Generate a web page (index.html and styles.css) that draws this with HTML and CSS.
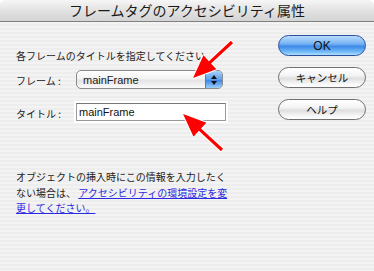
FILE: index.html
```html
<!DOCTYPE html>
<html>
<head>
  <title>フレームタグのアクセシビリティ属性</title>
  <meta charset="UTF-8">
  <link rel="stylesheet" href="styles.css">
</head>
<body>
  <div class="dialog">
    <div class="title-bar">フレームタグのアクセシビリティ属性</div>

    <div class="content">
      <div class="left-column">
        <p class="intro">各フレームのタイトルを指定してください</p>

        <div class="form-row">
          <label class="field-label" for="frame-select">フレーム :</label>
          <div class="popup" id="frame-select">
            <span class="popup-text">mainFrame</span>
            <span class="stepper">
              <svg width="8" height="12" viewBox="0 0 8 12">
                <path d="M4 1 L7 5 L1 5 Z" fill="#111"/>
                <path d="M4 11 L7 7 L1 7 Z" fill="#111"/>
              </svg>
            </span>
          </div>
        </div>

        <div class="form-row title-row">
          <label class="field-label" for="frame-title">タイトル :</label>
          <input type="text" id="frame-title" class="text-field" value="mainFrame">
        </div>

        <p class="note">
          オブジェクトの挿入時にこの情報を入力したく<br>
          ない場合は、 <a href="#">アクセシビリティの環境設定を変</a><br>
          <a href="#">更してください。</a>
        </p>
      </div>

      <div class="button-column">
        <button class="aqua-button default">OK</button>
        <button class="aqua-button">キャンセル</button>
        <button class="aqua-button">ヘルプ</button>
      </div>
    </div>

    <!-- strzałki wskazujące pola -->
    <svg class="arrows" width="374" height="271" viewBox="0 0 374 271">
      <g transform="translate(232 42) rotate(137.3)">
        <polygon points="0,-1.6 30,-1.6 30,-9.5 53,0 30,9.5 30,1.6 0,1.6" fill="#ff0000" stroke="#fff" stroke-width="2" stroke-linejoin="round" paint-order="stroke"/>
      </g>
      <g transform="translate(222 150) rotate(-137.3)">
        <polygon points="0,-1.6 30,-1.6 30,-9.5 53,0 30,9.5 30,1.6 0,1.6" fill="#ff0000" stroke="#fff" stroke-width="2" stroke-linejoin="round" paint-order="stroke"/>
      </g>
    </svg>
  </div>
</body>
</html>
```

FILE: styles.css
```css
body {
  margin: 0;
  background-color: #fff;
  font-family: "Noto Sans CJK JP", "Liberation Sans", sans-serif;
  color: #222;
}

.dialog {
  position: relative;
  width: 374px;
  height: 271px;
  overflow: hidden;
  border-radius: 6px 6px 0 0;
  background: repeating-linear-gradient(#ededed 0, #ededed 2px, #f3f3f3 2px, #f3f3f3 4px);
}

.title-bar {
  height: 21px;
  line-height: 21px;
  text-align: center;
  font-size: 14px;
  color: #1a1a1a;
  background: linear-gradient(#f6f6f6, #e2e2e2 50%, #d4d4d4);
  border-bottom: 1px solid #808080;
}

.content {
  display: flex;
  padding-left: 16px;
}

.left-column {
  width: 214px;
  padding-top: 26px;
}

.intro {
  margin: 0;
  font-size: 10px;
  line-height: 16px;
  white-space: nowrap;
}

.form-row {
  display: flex;
  align-items: center;
  margin-top: 6px;
}

.title-row {
  margin-top: 14px;
}

.field-label {
  width: 60px;
  font-size: 10px;
  padding-top: 2px;
}

/* popup menu w stylu Aqua */
.popup {
  display: flex;
  align-items: center;
  width: 145px;
  height: 17px;
  border: 1px solid #8a8a8a;
  border-radius: 5px;
  background: linear-gradient(#ffffff, #f2f2f2 45%, #e4e4e4 55%, #fbfbfb);
  overflow: hidden;
}

.popup-text {
  flex: 1;
  padding-left: 6px;
  font-family: "Liberation Sans", sans-serif;
  font-size: 11px;
  color: #222;
}

.stepper {
  display: flex;
  align-items: center;
  justify-content: center;
  width: 16px;
  height: 17px;
  border-left: 1px solid #5a7bb8;
  background: linear-gradient(#a9d1fa, #5b9ff0 50%, #3f86e6 55%, #9ccff9);
}

.text-field {
  width: 150px;
  height: 18px;
  box-sizing: border-box;
  margin: 0;
  padding: 0 2px;
  border: 1px solid #9a9a9a;
  border-top-color: #777;
  box-shadow: 0 0 0 2px #fff;
  background-color: #fff;
  font-family: "Liberation Sans", sans-serif;
  font-size: 11px;
  color: #111;
  outline: none;
}

.note {
  margin: 48px 0 0 0;
  font-size: 10px;
  line-height: 15.5px;
  white-space: nowrap;
}

.note a {
  color: #2a2ae0;
  text-decoration: underline;
}

.button-column {
  display: flex;
  flex-direction: column;
  gap: 11px;
  margin-left: 48px;
  padding-top: 13px;
}

.aqua-button {
  width: 88px;
  height: 21px;
  padding: 0;
  border: 1px solid #6f6f6f;
  border-radius: 11px;
  background: linear-gradient(#ffffff, #f4f4f4 40%, #dedede 55%, #f8f8f8 85%, #ffffff);
  font-family: "Noto Sans CJK JP", "Liberation Sans", sans-serif;
  font-size: 10.5px;
  color: #111;
  cursor: pointer;
}

.aqua-button.default {
  border-color: #2b4f9e;
  background: linear-gradient(#bcdcfb, #78b4f3 40%, #3f8ae8 55%, #76bdf8 85%, #b2e0ff);
  font-family: "Liberation Sans", sans-serif;
  font-size: 12px;
}

.arrows {
  position: absolute;
  top: 0;
  left: 0;
  pointer-events: none;
}
```
